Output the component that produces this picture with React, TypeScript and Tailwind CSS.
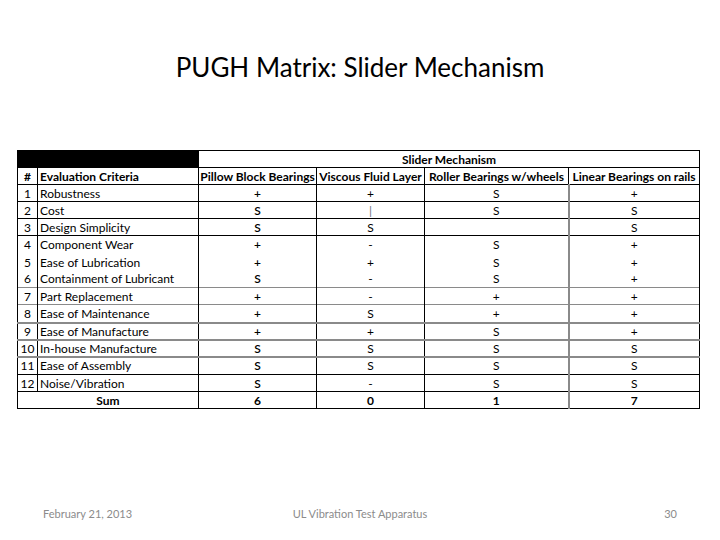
const font = { fontFamily: 'Lato, "Open Sans", sans-serif' }

type Row = {
  n: number
  name: string
  vals: string[]
  line: string
  h?: string
}

// row bottom lines differ in the source sheet (some grey, some missing)
const rows: Row[] = [
  { n: 1, name: 'Robustness', vals: ['+', '+', 'S', '+'], line: 'border-b border-black' },
  { n: 2, name: 'Cost', vals: ['S', '|', 'S', 'S'], line: 'border-b border-black' },
  { n: 3, name: 'Design Simplicity', vals: ['S', 'S', '', 'S'], line: 'border-b border-black' },
  { n: 4, name: 'Component Wear', vals: ['+', '-', 'S', '+'], line: '', h: 'h-[18px]' },
  { n: 5, name: 'Ease of Lubrication', vals: ['+', '+', 'S', '+'], line: '' },
  { n: 6, name: 'Containment of Lubricant', vals: ['S', '-', 'S', '+'], line: 'border-b border-[#8a8a8a]' },
  { n: 7, name: 'Part Replacement', vals: ['+', '-', '+', '+'], line: 'border-b border-[#8a8a8a]' },
  { n: 8, name: 'Ease of Maintenance', vals: ['+', 'S', '+', '+'], line: 'border-b-2 border-[#8a8a8a]', h: 'h-[18px]' },
  { n: 9, name: 'Ease of Manufacture', vals: ['+', '+', 'S', '+'], line: 'border-b-2 border-[#8a8a8a]' },
  { n: 10, name: 'In-house Manufacture', vals: ['S', 'S', 'S', 'S'], line: 'border-b-2 border-[#8a8a8a]' },
  { n: 11, name: 'Ease of Assembly', vals: ['S', 'S', 'S', 'S'], line: 'border-b border-black', h: 'h-[18px]' },
  { n: 12, name: 'Noise/Vibration', vals: ['S', '-', 'S', 'S'], line: 'border-b border-black' },
]

const colBorders = [
  'border-x border-black',
  'border-x border-black',
  'border-x border-black',
  'border-l-2 border-l-[#8a8a8a] border-r border-r-black',
]

export default function App() {
  return (
    <div className="w-[720px] h-[540px] bg-white flex flex-col text-black" style={font}>
      <h1 className="mt-[50px] text-center text-[26px] leading-[34px]">
        PUGH Matrix: Slider Mechanism
      </h1>

      <table className="mt-[66px] ml-[17px] w-[682px] border-collapse border border-black text-[12px] leading-none table-fixed">
        <colgroup>
          <col className="w-[20px]" />
          <col className="w-[161px]" />
          <col className="w-[118px]" />
          <col className="w-[108px]" />
          <col className="w-[144px]" />
          <col className="w-[131px]" />
        </colgroup>
        <tbody>
          <tr className="h-[17px] border-b border-black">
            <td colSpan={2} className="bg-black border-x border-black" />
            <td colSpan={4} className="pt-[1px] text-center font-bold border-x border-black">
              Slider Mechanism
            </td>
          </tr>
          <tr className="h-[17px] border-b border-black font-bold">
            <td className="pt-[1px] text-center border-x border-black">#</td>
            <td className="pt-[1px] pl-[2px] border-x border-black">Evaluation Criteria</td>
            <td className="pt-[1px] text-center border-x border-black whitespace-nowrap">Pillow Block Bearings</td>
            <td className="pt-[1px] text-center border-x border-black whitespace-nowrap">Viscous Fluid Layer</td>
            <td className="pt-[1px] text-center border-x border-black whitespace-nowrap">Roller Bearings w/wheels</td>
            <td className="pt-[1px] text-center border-x border-black whitespace-nowrap">Linear Bearings on rails</td>
          </tr>
          {rows.map((r) => (
            <tr key={r.n} className={`${r.h ?? 'h-[17px]'} ${r.line}`}>
              <td className="pt-[1px] text-center border-x border-black whitespace-nowrap">{r.n}</td>
              <td className="pt-[1px] pl-[2px] border-x border-black whitespace-nowrap">{r.name}</td>
              {r.vals.map((v, i) => (
                <td
                  key={i}
                  className={`pt-[1px] text-center ${colBorders[i]} ${v === '|' ? 'text-gray-500' : ''} ${i === 0 ? 'font-semibold' : ''}`}
                >
                  {v}
                </td>
              ))}
            </tr>
          ))}
          <tr className="h-[17px] font-bold">
            <td colSpan={2} className="pt-[1px] text-center border-x border-black">Sum</td>
            <td className={`pt-[1px] text-center ${colBorders[0]}`}>6</td>
            <td className={`pt-[1px] text-center ${colBorders[1]}`}>0</td>
            <td className={`pt-[1px] text-center ${colBorders[2]}`}>1</td>
            <td className={`pt-[1px] text-center ${colBorders[3]}`}>7</td>
          </tr>
        </tbody>
      </table>

      <div className="mt-auto mb-[18px] px-[43px] grid grid-cols-3 text-[11px] text-[#8b8b8b]">
        <span className="text-left">February 21, 2013</span>
        <span className="text-center">UL Vibration Test Apparatus</span>
        <span className="text-right">30</span>
      </div>
    </div>
  )
}
